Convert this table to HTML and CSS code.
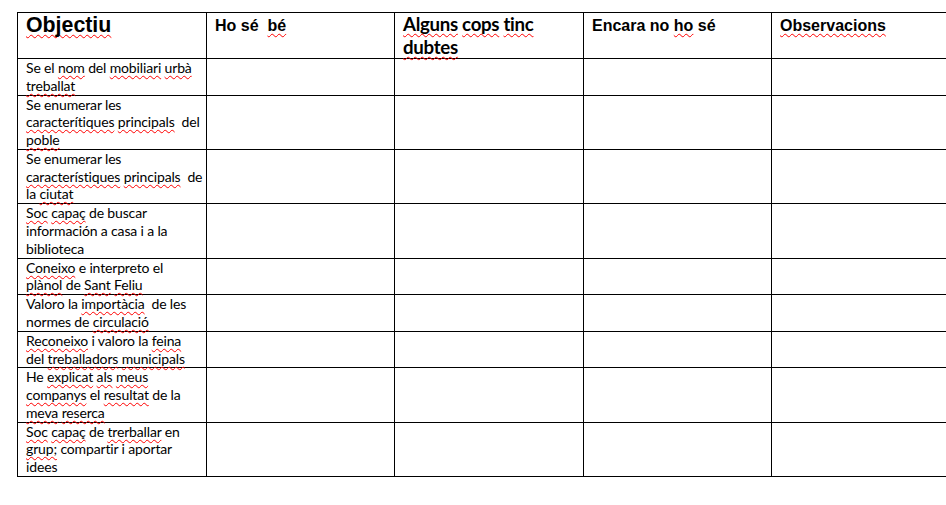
FILE: index.html
```html
<!DOCTYPE html>
<html lang="ca">
<head>
<meta charset="utf-8">
<title>Objectius</title>
<link rel="stylesheet" href="styles.css">
</head>
<body>
<div class="page">
<table class="grid">
<colgroup>
<col class="c1"><col class="c2"><col class="c3"><col class="c4"><col class="c5">
</colgroup>
<thead>
<tr>
<th class="h-obj"><span class="sp">Objectiu</span></th>
<th class="h-arial">Ho sé&nbsp; <span class="sp">bé</span></th>
<th class="h-cal"><span class="sp">Alguns</span> <span class="sp">cops</span> <span class="sp">tinc</span><br><span class="sp">dubtes</span></th>
<th class="h-arial">Encara no <span class="sp">ho</span> sé</th>
<th class="h-arial"><span class="sp">Observacions</span></th>
</tr>
</thead>
<tbody>
<tr>
<td>Se el <span class="sp">nom</span> del <span class="sp">mobiliari</span> <span class="sp">urbà</span><br><span class="sp">treballat</span></td>
<td></td><td></td><td></td><td></td>
</tr>
<tr>
<td>Se enumerar les<br><span class="sp">caracterítiques</span> <span class="sp">principals</span>&nbsp; del<br><span class="sp">poble</span></td>
<td></td><td></td><td></td><td></td>
</tr>
<tr>
<td>Se enumerar les<br><span class="sp">característiques</span> <span class="sp">principals</span>&nbsp; de<br>la <span class="sp">ciutat</span></td>
<td></td><td></td><td></td><td></td>
</tr>
<tr>
<td><span class="sp">Soc</span> <span class="sp">capaç</span> de buscar<br>información a casa i a la<br>biblioteca</td>
<td></td><td></td><td></td><td></td>
</tr>
<tr>
<td><span class="sp">Coneixo</span> e interpreto el<br><span class="sp">plànol</span> de <span class="sp">Sant</span> <span class="sp">Feliu</span></td>
<td></td><td></td><td></td><td></td>
</tr>
<tr>
<td>Valoro la <span class="sp">importàcia</span>&nbsp; de les<br>normes de <span class="sp">circulació</span></td>
<td></td><td></td><td></td><td></td>
</tr>
<tr>
<td><span class="sp">Reconeixo</span> i valoro la <span class="sp">feina</span><br>del <span class="sp">treballadors</span> <span class="sp">municipals</span></td>
<td></td><td></td><td></td><td></td>
</tr>
<tr>
<td>He <span class="sp">explicat</span> <span class="sp">als</span> <span class="sp">meus</span><br><span class="sp">companys</span> el <span class="sp">resultat</span> de la<br><span class="sp">meva</span> <span class="sp">reserca</span></td>
<td></td><td></td><td></td><td></td>
</tr>
<tr>
<td><span class="sp">Soc</span> <span class="sp">capaç</span> de <span class="sp">trerballar</span> en<br><span class="sp">grup;</span> compartir i aportar<br>idees</td>
<td></td><td></td><td></td><td></td>
</tr>
</tbody>
</table>
</div>
</body>
</html>
```

FILE: styles.css
```css
html, body {
  margin: 0;
  padding: 0;
  background: #ffffff;
  color: #000000;
}

.page {
  box-sizing: border-box;
  width: 946px;
  height: 505px;
  padding: 12px 0 0 17px;
  overflow: hidden;
}

.grid {
  border-collapse: separate;
  border-spacing: 0;
  table-layout: fixed;
  width: 943px;
  border-right: 1px solid #000;
  border-bottom: 1px solid #000;
}

.c1 { width: 189px; }
.c2 { width: 188px; }
.c3 { width: 189px; }
.c4 { width: 188px; }
.c5 { width: 189px; }

.grid th,
.grid td {
  border-left: 1px solid #000;
  border-top: 1px solid #000;
  padding: 0 4px 0 8px;
  vertical-align: top;
  text-align: left;
  white-space: nowrap;
}

.grid td {
  font-family: Lato, "Liberation Sans", sans-serif;
  font-size: 14px;
  letter-spacing: -0.15px;
  line-height: 17.78px;
  font-weight: 400;
}

.grid th.h-obj {
  font-family: "Liberation Sans", Arial, sans-serif;
  font-size: 21.33px;
  line-height: 24px;
  font-weight: 700;
  padding-top: 0;
}

.grid th.h-arial {
  font-family: "Liberation Sans", Arial, sans-serif;
  font-size: 16px;
  line-height: 18px;
  font-weight: 700;
  padding-top: 4px;
}

.grid th.h-cal {
  font-family: Lato, "Liberation Sans", sans-serif;
  font-size: 18.67px;
  letter-spacing: -0.3px;
  line-height: 22.5px;
  font-weight: 700;
  padding-top: 0;
}

.sp {
  text-decoration-line: underline;
  text-decoration-style: wavy;
  text-decoration-color: #ff0000;
  text-decoration-thickness: 1px;
  text-underline-offset: 2px;
  text-decoration-skip-ink: none;
}
```
